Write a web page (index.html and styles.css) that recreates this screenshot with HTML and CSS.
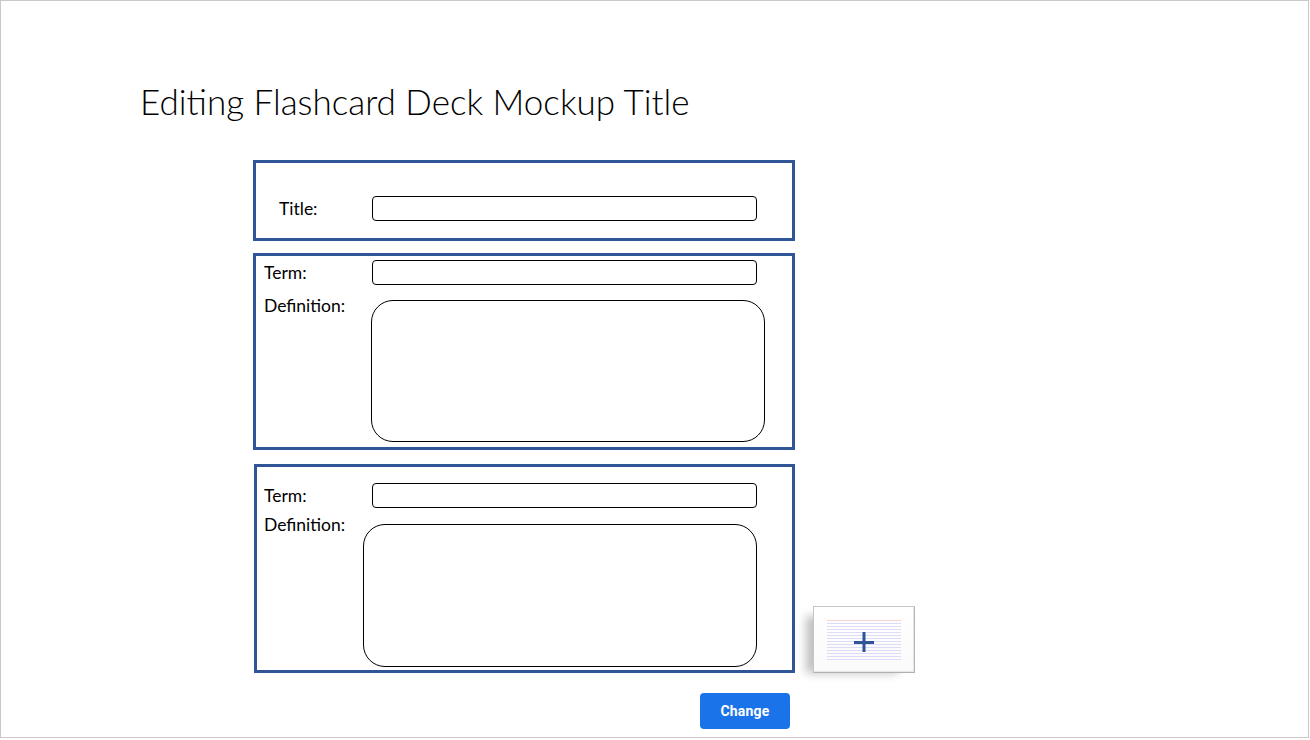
FILE: index.html
```html
<!DOCTYPE html>
<html lang="en">
<head>
<meta charset="utf-8">
<title>Editing Flashcard Deck</title>
<link rel="stylesheet" href="styles.css">
</head>
<body>
<div class="slide">
  <h1 class="heading">Editing Flashcard Deck Mockup Title</h1>
  <div class="deck">
    <section class="card card-title">
      <div class="row row-center">
        <span class="label">Title:</span>
        <div class="input"></div>
      </div>
    </section>
    <section class="card card-a">
      <div class="row row-center">
        <span class="label">Term:</span>
        <div class="input"></div>
      </div>
      <div class="row row-top gap-a">
        <span class="label label-def-a">Definition:</span>
        <div class="textarea"></div>
      </div>
    </section>
    <div class="last-row">
      <section class="card card-b">
        <div class="row row-center">
          <span class="label">Term:</span>
          <div class="input"></div>
        </div>
        <div class="row row-top gap-b">
          <span class="label label-def-b">Definition:</span>
          <div class="textarea textarea-b"></div>
        </div>
      </section>
      <div class="add-card" title="Add card">
        <div class="ruled">
          <svg class="plus" width="20" height="20" viewBox="0 0 20 20" aria-hidden="true">
            <rect x="0" y="9" width="20" height="3" fill="#2f5597"/>
            <rect x="8.5" y="0" width="3" height="20" fill="#2f5597"/>
          </svg>
        </div>
      </div>
    </div>
    <div class="actions">
      <button class="btn-change" type="button">Change</button>
    </div>
  </div>
</div>
</body>
</html>
```

FILE: styles.css
```css
* { box-sizing: border-box; }

html, body {
  margin: 0;
  padding: 0;
  background: #ffffff;
}

body {
  font-family: "Lato", "Liberation Sans", sans-serif;
  color: #000;
}

.slide {
  width: 1309px;
  height: 738px;
  border: 1px solid #c9c9c9;
  box-shadow: 0 1px 0 #dedede;
  background: #fff;
  overflow: hidden;
}

.heading {
  margin: 78px 0 0 139px;
  font-family: "Lato", "Liberation Sans", sans-serif;
  font-weight: 300;
  font-size: 35px;
  line-height: 44px;
  color: #000;
  letter-spacing: 0;
}

.deck {
  margin-left: 252px;
  margin-top: 37px;
  display: flex;
  flex-direction: column;
}

.card {
  border: 3px solid #2f5597;
  width: 542px;
  display: flex;
  flex-direction: column;
}

.card-title {
  height: 81px;
  padding: 33px 0 0 23px;
}
.card-title .label { width: 93px; }

.card-a {
  margin-top: 12px;
  height: 197px;
  padding: 4px 0 0 8px;
}
.card-a .label { width: 108px; }
.card-a .label-def-a { width: 107px; }

.last-row {
  margin-top: 14px;
  margin-left: 1px;
  display: flex;
  align-items: flex-end;
  gap: 18px;
}

.card-b {
  width: 541px;
  height: 209px;
  padding: 16px 0 0 7px;
}
.card-b .label { width: 108px; }
.card-b .label-def-b { width: 99px; }

.row {
  display: flex;
}
.row-center { align-items: center; }
.row-top { align-items: flex-start; }
.gap-a { margin-top: 15px; }
.gap-b { margin-top: 16px; }

.label {
  flex: none;
  font-size: 17.5px;
  line-height: 20px;
  color: #000;
}
.label-def-a { margin-top: -4px; }
.label-def-b { margin-top: -9px; }

.input {
  width: 385px;
  height: 25px;
  border: 1px solid #000;
  border-radius: 4px;
  background: #fff;
}

.textarea {
  width: 394px;
  height: 142px;
  border: 1px solid #000;
  border-radius: 22px;
  background: #fff;
}
.textarea-b { height: 143px; }

.add-card {
  width: 102px;
  height: 67px;
  border: 1px solid #c6c6c6;
  border-right-color: #b5b5b5;
  border-bottom-color: #b0b0b0;
  background: linear-gradient(#ffffff, #fafafa);
  box-shadow: -12px 5px 9px -5px rgba(0, 0, 0, 0.25), inset -1px -1px 0 #e6e6e6;
  padding: 13px 13px 0 13px;
}

.ruled {
  height: 41px;
  border-top: 1px solid #f6d3d3;
  background: repeating-linear-gradient(to bottom, transparent 0px, transparent 2px, #dcdcf8 2px, #dcdcf8 3px);
  display: flex;
  align-items: center;
  justify-content: center;
}

.plus { display: block; margin-top: 2px; }

.actions {
  margin-top: 20px;
  padding-left: 447px;
}

.btn-change {
  width: 90px;
  height: 36px;
  border: none;
  border-radius: 4px;
  background: #1a73e8;
  color: #fff;
  font-family: "Roboto", "Open Sans", sans-serif;
  font-weight: 700;
  font-size: 14px;
  letter-spacing: 0.2px;
  padding: 0;
  cursor: pointer;
}
```
